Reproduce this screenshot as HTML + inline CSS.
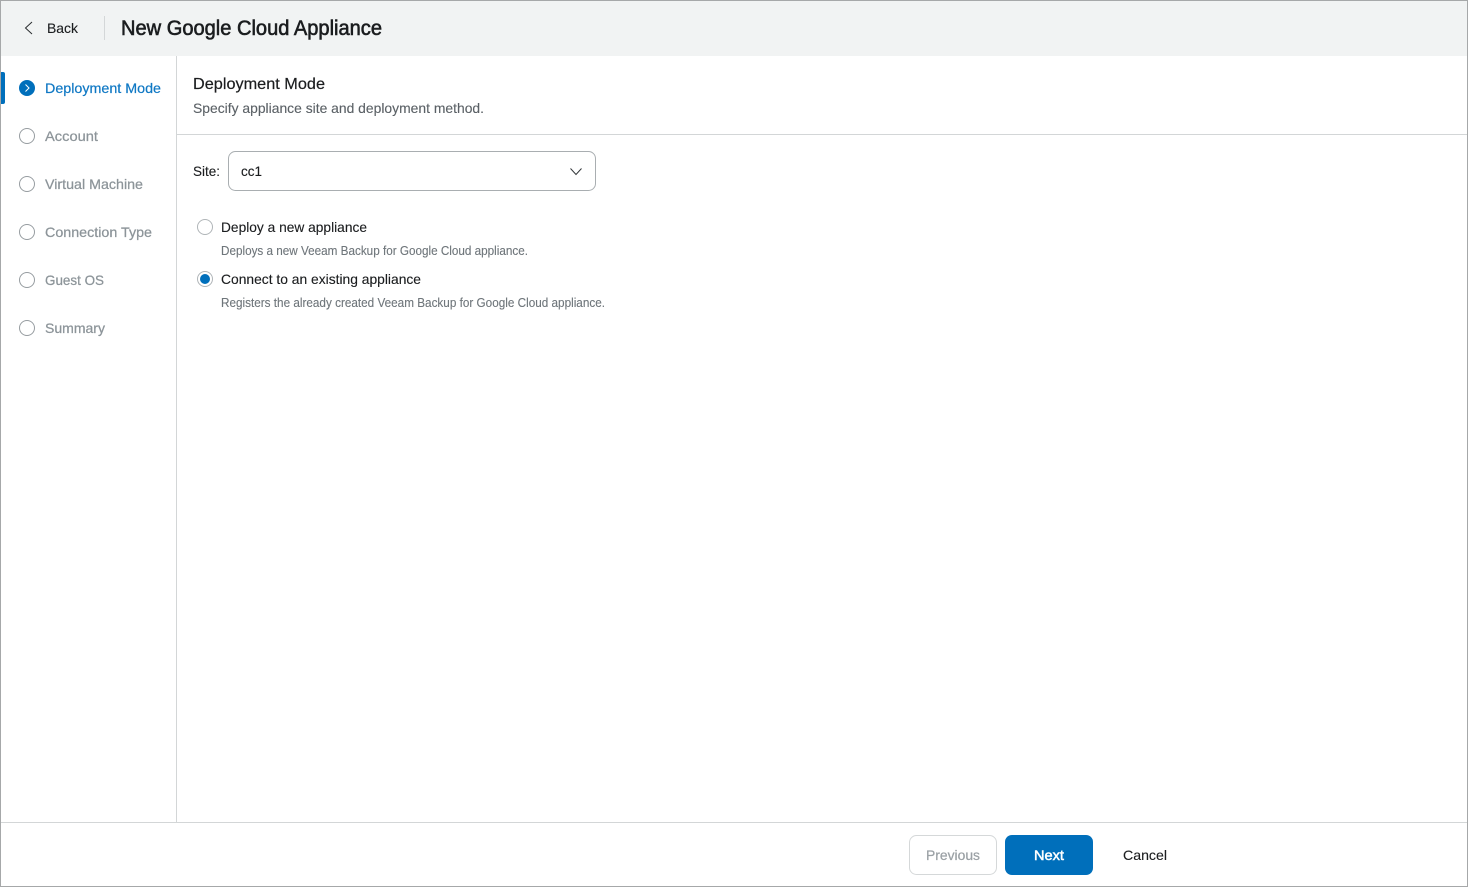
<!DOCTYPE html>
<html lang="en">
<head>
<meta charset="utf-8">
<title>New Google Cloud Appliance</title>
<style>
html,body{margin:0;padding:0;width:1468px;height:887px;overflow:hidden;background:#fff}
svg{display:block;position:absolute;left:0;top:0}
text{font-family:"Liberation Sans",sans-serif;font-size:14px;fill:#1b1d1f;stroke:#1b1d1f;stroke-width:.12}
.g{fill:#8c9499;stroke:#8c9499;stroke-width:.25}
.s{fill:#6f767b;stroke:#6f767b;font-size:12.5px}
.m{fill:#5b6166;stroke:#5b6166}
</style>
</head>
<body>
<svg width="1468" height="887" viewBox="0 0 1468 887" xmlns="http://www.w3.org/2000/svg">
  <rect x="0" y="0" width="1468" height="887" fill="#fff"/>
  <!-- header -->
  <rect x="1" y="1" width="1466" height="55" fill="#f1f3f3"/>
  <rect x="104" y="16" width="1" height="24" fill="#d4d7d8"/>
  <path d="M32 22 L25.5 28 L32 34" fill="none" stroke="#2a2d2f" stroke-width="1"/>
  <text x="47" y="33" textLength="31" lengthAdjust="spacingAndGlyphs">Back</text>
  <text x="121" y="35" textLength="261" lengthAdjust="spacingAndGlyphs" style="font-size:21px;stroke-width:.6">New Google Cloud Appliance</text>

  <!-- sidebar -->
  <rect x="176" y="56" width="1" height="767" fill="#d3d6d7"/>
  <path d="M1 72 H3 a2 2 0 0 1 2 2 V102 a2 2 0 0 1 -2 2 H1 Z" fill="#006fbb"/>
  <circle cx="27" cy="88" r="8" fill="#006fbb"/>
  <path d="M25.5 84.5 L29 88 L25.5 91.5" fill="none" stroke="#fff" stroke-width="1"/>
  <text x="45" y="93" textLength="116" lengthAdjust="spacingAndGlyphs" style="fill:#0f78c4;stroke:#0f78c4;stroke-width:.2">Deployment Mode</text>

  <circle cx="27" cy="136" r="7.500" fill="none" stroke="#979da1" stroke-width="1"/>
  <text class="g" x="45" y="141" textLength="53" lengthAdjust="spacingAndGlyphs">Account</text>
  <circle cx="27" cy="184" r="7.500" fill="none" stroke="#979da1" stroke-width="1"/>
  <text class="g" x="45" y="189" textLength="98" lengthAdjust="spacingAndGlyphs">Virtual Machine</text>
  <circle cx="27" cy="232" r="7.500" fill="none" stroke="#979da1" stroke-width="1"/>
  <text class="g" x="45" y="237" textLength="107" lengthAdjust="spacingAndGlyphs">Connection Type</text>
  <circle cx="27" cy="280" r="7.500" fill="none" stroke="#979da1" stroke-width="1"/>
  <text class="g" x="45" y="285" textLength="59" lengthAdjust="spacingAndGlyphs">Guest OS</text>
  <circle cx="27" cy="328" r="7.500" fill="none" stroke="#979da1" stroke-width="1"/>
  <text class="g" x="45" y="333" textLength="60" lengthAdjust="spacingAndGlyphs">Summary</text>

  <!-- content heading -->
  <text x="193" y="89" textLength="132" lengthAdjust="spacingAndGlyphs" style="font-size:16px;stroke-width:.2">Deployment Mode</text>
  <text class="m" x="193" y="113" textLength="291" lengthAdjust="spacingAndGlyphs">Specify appliance site and deployment method.</text>
  <rect x="177" y="134" width="1290" height="1" fill="#d3d6d7"/>

  <!-- site -->
  <text x="193" y="176" textLength="27" lengthAdjust="spacingAndGlyphs">Site:</text>
  <rect x="228.500" y="151.500" width="367" height="39" rx="7" fill="#fff" stroke="#a9aeb1" stroke-width="1"/>
  <text x="241" y="176" textLength="21" lengthAdjust="spacingAndGlyphs">cc1</text>
  <path d="M570.500 168.500 L576 174.500 L581.500 168.500" fill="none" stroke="#33373a" stroke-width="1"/>

  <!-- radios -->
  <circle cx="205" cy="227" r="7.500" fill="#fff" stroke="#b0b5b8" stroke-width="1"/>
  <text x="221" y="232" textLength="146" lengthAdjust="spacingAndGlyphs">Deploy a new appliance</text>
  <text class="s" x="221" y="255" textLength="307" lengthAdjust="spacingAndGlyphs">Deploys a new Veeam Backup for Google Cloud appliance.</text>
  <circle cx="205" cy="279" r="7.500" fill="#fff" stroke="#b0b5b8" stroke-width="1"/>
  <circle cx="205" cy="279" r="5" fill="#006fbb"/>
  <text x="221" y="284" textLength="200" lengthAdjust="spacingAndGlyphs">Connect to an existing appliance</text>
  <text class="s" x="221" y="307" textLength="384" lengthAdjust="spacingAndGlyphs">Registers the already created Veeam Backup for Google Cloud appliance.</text>

  <!-- footer -->
  <rect x="1" y="822" width="1466" height="1" fill="#d3d6d7"/>
  <rect x="909.500" y="835.500" width="87" height="39" rx="7" fill="#fff" stroke="#d5d8d9" stroke-width="1"/>
  <text x="926" y="860" textLength="54" lengthAdjust="spacingAndGlyphs" style="fill:#9ba1a5;stroke:#9ba1a5;stroke-width:.25">Previous</text>
  <rect x="1005" y="835" width="88" height="40" rx="7" fill="#006fbb"/>
  <text x="1034" y="860" textLength="30" lengthAdjust="spacingAndGlyphs" style="fill:#fff;stroke:#fff;stroke-width:.5">Next</text>
  <text x="1123" y="860" textLength="44" lengthAdjust="spacingAndGlyphs">Cancel</text>

  <!-- window border -->
  <rect x="0.500" y="0.500" width="1467" height="886" fill="none" stroke="#a6a8a9" stroke-width="1"/>
</svg>
</body>
</html>
